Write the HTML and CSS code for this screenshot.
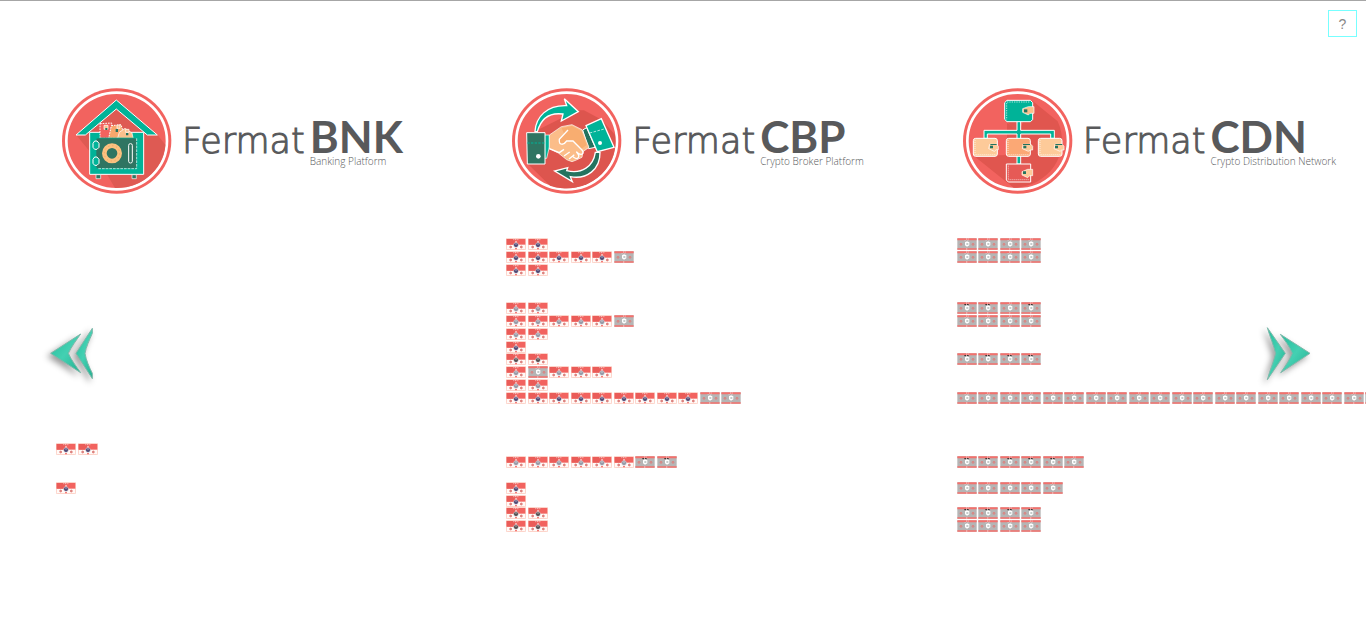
FILE: index.html
```html
<!DOCTYPE html>
<html lang="en">
<head>
<meta charset="utf-8">
<title>Fermat Platforms</title>
<link rel="stylesheet" href="styles.css">
</head>
<body>
<button class="help" type="button" aria-label="Help">?</button>

<main class="stage">
  <header class="brands">
    <section class="brand">
      <svg class="emblem" viewBox="36 25 330 318" aria-hidden="true">
        <ellipse cx="200" cy="184" rx="164" ry="158" fill="#f2635f"/>
        <ellipse cx="200" cy="184" rx="151" ry="145" fill="#f2635f" stroke="#fff" stroke-width="8"/>
        <path d="M78 165 L160 265 L195 325 A147 141 0 0 0 346 195 L322 165 L200 60Z" fill="#de5a53"/>
        <path d="M130 154 L199 92 L268 154Z" fill="#de5a53"/>
        <path d="M199 61 L322 166 H292 L199 88 L106 166 H78Z" fill="#00b398" stroke="#fff" stroke-width="3"/>
        <path d="M119 158 H281 V284 H119Z" fill="#00b398" stroke="#fff" stroke-width="3"/>
        <path d="M150 132 L185 130 L188 176 H150Z" fill="#f2635f" stroke="#fff" stroke-width="3" stroke-dasharray="5 3"/>
        <path d="M184 138 L213 135 L226 176 H176Z" fill="#f7a76c" stroke="#fff" stroke-width="3" stroke-dasharray="5 3"/>
        <path d="M208 158 L225 146 L246 160 L250 178 H202Z" fill="#fbc08c" stroke="#fff" stroke-width="2"/>
        <path d="M162 137h12v12h-12z M201 136h9v10h-9z M227 149h10v9h-10z" fill="#fbc08c" stroke="#fff" stroke-width="2"/>
        <path d="M166 145h6v6h-6z M197 148h7v9h-7z M228 160h7v7h-7z" fill="#24735f"/>
        <rect x="138" y="175" width="122" height="92" rx="6" fill="#2f7562" stroke="#00b398" stroke-width="2"/>
        <path d="M260 176 V267 H144" fill="none" stroke="#fff" stroke-width="2" stroke-dasharray="8 3"/>
        <circle cx="186" cy="221" r="23" fill="#2f7562" stroke="#fbc17f" stroke-width="14"/>
        <circle cx="186" cy="221" r="23" fill="none" stroke="#f2a765" stroke-width="3" stroke-dasharray="4 8"/>
        <rect x="236" y="192" width="11" height="58" rx="5" fill="#2f7562" stroke="#fff" stroke-width="3"/>
        <path d="M134 184h7l6 7v12l-6 6h-7l-5-6v-12z M134 232h7l6 7v12l-6 6h-7l-5-6v-12z" fill="#00b398" stroke="#fff" stroke-width="3"/>
        <path d="M138 285h14v12h-14z M246 285h13v12h-13z" fill="#2f7562" stroke="#fff" stroke-width="2"/>
      </svg>
      <h2 class="wordmark"><span class="name">Fermat</span><span class="suite"><b class="code">BNK</b><small class="tagline">Banking Platform</small></span></h2>
    </section>

    <section class="brand">
      <svg class="emblem" viewBox="36 25 330 318" aria-hidden="true">
        <ellipse cx="200" cy="184" rx="164" ry="158" fill="#f2635f"/>
        <ellipse cx="200" cy="184" rx="151" ry="145" fill="#f2635f" stroke="#fff" stroke-width="8"/>
        <path d="M232 92 L252 92 L305 120 L345 165 A147 141 0 0 1 150 318 L84 253 V165Z" fill="#dd554e"/>
        <path d="M105 155 C108 112 140 76 200 78 L193 57 L235 96 L184 124 L189 103 C150 98 124 112 112 156Z" fill="#00b398" stroke="#fff" stroke-width="4"/>
        <path d="M300 218 C301 270 260 300 211 291 L217 306 L164 274 L203 264 L200 273 C246 284 280 260 286 218Z" fill="#24735f" stroke="#fff" stroke-width="4"/>
        <path d="M134 166 H148 V202 L140 236 H134Z" fill="#00b398" stroke="#fff" stroke-width="2"/>
        <path d="M248 151 L260 144 L286 203 L266 207Z" fill="#24735f" stroke="#fff" stroke-width="3"/>
        <path d="M148 166 L184 141 L216 135 L246 150 L267 203 L249 216 L246 233 L229 241 L216 246 L200 240 L175 220 L148 207Z" fill="#fbbd89" stroke="#fff" stroke-width="2"/>
        <path d="M185 146 L216 139 L244 154 L260 196 L244 208 L218 183 L200 187 L184 195 L177 182 L193 164Z" fill="#f8ad70"/>
        <path d="M204 151 L178 179 C176 197 190 198 200 184 L219 184 L246 211 C256 223 241 230 229 216 M148 207 L178 219 L192 209 M192 229 L209 217 M207 238 L223 225 M229 216 C247 235 228 244 217 228" fill="none" stroke="#fff" stroke-width="4"/>
        <path d="M80 159 H135 V253 H82Z" fill="#2f7562" stroke="#fff" stroke-width="3"/>
        <path d="M82 190 H133" stroke="#00b398" stroke-width="3" stroke-dasharray="7 4"/>
        <circle cx="115" cy="230" r="7" fill="#fff"/>
        <path d="M258 138 L304 117 L342 203 L292 216Z" fill="#00b398" stroke="#fff" stroke-width="4"/>
        <path d="M269 160 L316 147" stroke="#fff" stroke-width="2" stroke-dasharray="8 4"/>
        <circle cx="300" cy="190" r="6" fill="#fff"/>
      </svg>
      <h2 class="wordmark"><span class="name">Fermat</span><span class="suite"><b class="code">CBP</b><small class="tagline">Crypto Broker Platform</small></span></h2>
    </section>

    <section class="brand">
      <svg class="emblem" viewBox="36 25 330 318" aria-hidden="true">
        <ellipse cx="200" cy="184" rx="164" ry="158" fill="#f2635f"/>
        <ellipse cx="200" cy="184" rx="151" ry="145" fill="#f2635f" stroke="#fff" stroke-width="8"/>
        <path d="M245 64 L320 125 A147 141 0 0 1 188 324 L70 230 L168 226 V130 L205 152Z" fill="#e0564f"/>
        <path d="M164 122 L190 150 H210 V124Z" fill="#de5a53"/>
        <path d="M99 176 V152 H198 V124 H209 V152 H310 V176 H299 V163 H209 V253 H198 V163 H109 V176Z" fill="#00b398" stroke="#fff" stroke-width="3"/>
        <path d="M168 62 H238 L245 69 V120 L238 126 H168 L161 119 V69Z" fill="#00b398" stroke="#fff" stroke-width="3"/>
        <path d="M168 67 H238 M167 70 V120" fill="none" stroke="#fff" stroke-width="2" stroke-dasharray="4 3"/>
        <path d="M215 87 L232 81 H249 V101 H237 L232 106 L215 98Z" fill="#fbc08c" stroke="#fff" stroke-width="2"/>
        <path d="M219 89h10v9h-10z" fill="#24735f"/>
        <g stroke="#fff" stroke-width="3">
          <rect x="67" y="176" width="72" height="54" rx="7" fill="#fdca99"/>
          <rect x="166" y="176" width="72" height="54" rx="7" fill="#fba875"/>
          <rect x="262" y="176" width="71" height="54" rx="7" fill="#fdca99"/>
          <path d="M166 253 H239 V307 H172 L166 301Z" fill="#e65a56"/>
        </g>
        <g fill="none" stroke="#fff" stroke-width="2" stroke-dasharray="3 3">
          <path d="M72 181 V225 H134 M171 181 V225 H233 M267 181 V225 H328 M172 258 V300 H234"/>
        </g>
        <path d="M116 194 H137 L142 200 V210 H136 L130 215 L113 207Z M216 194 H240 L245 200 V211 H238 L232 215 L214 207Z M312 194 H334 L339 200 V211 H332 L327 215 L309 207Z M213 276 L230 269 H245 V288 H236 L230 294 L213 286Z" fill="#fdca99" stroke="#fff" stroke-width="2"/>
        <path d="M118 193h19v3h-19z M117 198h9v8h-9z M216 193h21v3h-21z M217 198h9v8h-9z M313 193h21v3h-21z M312 198h9v8h-9z M216 275h9v8h-9z" fill="#24735f"/>
      </svg>
      <h2 class="wordmark"><span class="name">Fermat</span><span class="suite"><b class="code">CDN</b><small class="tagline">Crypto Distribution Network</small></span></h2>
    </section>
  </header>

  <div class="boards">
    <section class="board" data-board="bnk"></section>
    <section class="board" data-board="cbp"></section>
    <section class="board" data-board="cdn"></section>
  </div>

  <button class="nav nav-prev" type="button" aria-label="Previous">
    <svg viewBox="48 45 150 174" width="50" height="58">
      <defs>
        <linearGradient id="teal" x1="0" y1="0" x2="1" y2="1"><stop offset="0" stop-color="#22bd9c"/><stop offset=".5" stop-color="#44d0b2"/><stop offset="1" stop-color="#22b091"/></linearGradient>
      </defs>
      <g fill="url(#teal)" stroke="#7fb8aa" stroke-width="3" stroke-linejoin="round">
        <path d="M62 130 L152 72 C138 92 124 110 115 130 C124 150 138 168 152 188Z"/>
        <path d="M138 130 L187 55 V70 C178 90 168 112 165 130 C168 150 178 172 187 190 V206Z"/>
      </g>
    </svg>
  </button>
  <button class="nav nav-next" type="button" aria-label="Next">
    <svg viewBox="60 45 156 174" width="52" height="58">
      <g fill="url(#teal)" stroke="#7fb8aa" stroke-width="3" stroke-linejoin="round">
        <path d="M210 130 L121 73 C135 92 149 110 157 130 C149 150 136 168 122 188Z"/>
        <path d="M136 130 L82 53 C90 80 102 110 107 130 C102 152 90 180 82 209Z"/>
      </g>
    </svg>
  </button>
</main>

<svg class="symbols" aria-hidden="true">
  <symbol id="tile-done" viewBox="0 0 60 36">
    <rect x="1" y="1" width="58" height="34" rx="3" fill="#fffaf7" stroke="#fbb5a6" stroke-width="2"/>
    <path d="M2 3H58V20H2Z" fill="#f2635f"/>
    <path d="M2 3H30V20H2Z" fill="#ea5c58"/>
    <path d="M22 5H38" stroke="#fff" stroke-width="2" stroke-dasharray="3 2"/>
    <path d="M30 9V14" stroke="#fff" stroke-width="3"/>
    <circle cx="30" cy="21" r="7" fill="currentColor" stroke="#d9d3dc" stroke-width="2"/>
    <path d="M30 16V22" stroke="#fff" stroke-width="2"/>
    <path d="M30 30V34" stroke="#f2635f" stroke-width="5"/>
    <circle cx="14" cy="27" r="3" fill="#c99" stroke="#e4605b" stroke-width="2"/>
    <circle cx="46" cy="27" r="3" fill="#c99" stroke="#e4605b" stroke-width="2"/>
  </symbol>
  <symbol id="tile-concept" viewBox="0 0 60 36">
    <path d="M1 1H59V35H1Z" fill="#b5b5b5"/>
    <path d="M1 1H59V7H1Z M1 31H59V35H1Z" fill="#f4706c"/>
    <path d="M27 3H35 M27 33H33" stroke="#fff" stroke-width="2" stroke-dasharray="3 2"/>
    <path d="M22 8H38" stroke="currentColor" stroke-width="3" stroke-dasharray="5 3"/>
    <path d="M24 13L30 10L37 13V22L30 26L24 22Z" fill="#fff"/>
    <path d="M28 16H34V20H28Z" fill="#a9b3b0"/>
    <circle cx="12" cy="19" r="3" fill="#c79a98" stroke="#e77672" stroke-width="2"/>
    <circle cx="48" cy="19" r="3" fill="#c79a98" stroke="#e77672" stroke-width="2"/>
  </symbol>
</svg>
<script src="boards.js"></script>
</body>
</html>
```
FILE: styles.css
```css
* {
  box-sizing: border-box;
}

body {
  margin: 0;
  background: #fff;
  color: #58595b;
  font-family: Lato, "Liberation Sans", sans-serif;
  overflow: hidden;
}

.stage {
  position: relative;
  min-height: 100vh;
  padding-top: 87px;
  border-top: 1px solid #a6a6a6;
}

.help {
  position: absolute;
  z-index: 2;
  top: 10px;
  right: 9px;
  width: 29px;
  height: 27px;
  padding: 0;
  border: 1px solid #7ff;
  background: #fff;
  color: #888;
  font: 14px "Liberation Sans", sans-serif;
}

/* The last column runs past the right edge of the window. */
.brands,
.boards {
  display: grid;
  grid-template-columns: repeat(3, minmax(0, 1fr));
}

.brands {
  margin-right: -47px;
  padding-left: 62px;
}

.brand {
  display: flex;
  align-items: flex-start;
  gap: 10px;
}

.emblem {
  flex: none;
  width: 110px;
  height: 106px;
}

.wordmark {
  display: flex;
  align-items: baseline;
  gap: 5px;
  margin: 29px 0 0;
  font-weight: 300;
  line-height: 38px;
  white-space: nowrap;
}

.name {
  font-family: "DejaVu Sans Light", "DejaVu Sans", sans-serif;
  font-size: 35px;
  font-weight: 200;
  -webkit-text-stroke: 1px #58595b;
}

.suite {
  display: flex;
  flex-direction: column;
}

.code {
  font-size: 44px;
  font-weight: 700;
}

.tagline {
  font-family: "Open Sans", "Noto Sans", sans-serif;
  font-size: 10px;
  line-height: 12px;
}

.boards {
  margin-top: 44px;
  margin-right: -41px;
  padding-left: 56px;
}

.board {
  display: grid;
  grid-template-columns: repeat(20, 1fr);
  grid-template-rows: repeat(23, 1fr);
  width: 430px;
  height: 295px;
}

.tile {
  width: 20px;
  height: 12px;
}

.core-navy { color: #3b3566; }
.core-slate { color: #8b8f9c; }
.core-dark { color: #403c3c; }
.mark-light { color: #c4c4c4; }
.mark-black { color: #222; }

.nav {
  position: absolute;
  top: 324px;
  padding: 0;
  border: 0;
  background: none;
  line-height: 0;
  filter: drop-shadow(-3px 3px 3px #999);
}

.nav-prev {
  left: 46px;
}

.nav-next {
  right: 54px;
}

.symbols {
  position: absolute;
  width: 0;
  height: 0;
}
```
FILE: boards.js
```js
// Each entry: [row, finished tiles and concept tiles in order, colour class].
// "d" is a finished component, "c" a concept one, "k" a concept with a black mark.
const boards = {
  bnk: [[17, "dd", "navy"], [20, "d", "navy"]],
  cbp: [
    [1, "dd", "navy"], [2, "dddddc", "navy"], [3, "dd", "navy"],
    [6, "dd", "slate"], [7, "dddddc", "slate"], [8, "dd", "slate"],
    [9, "d", "navy"], [10, "dd", "dark"], [11, "dcddd", "slate"],
    [12, "dd", "slate"], [13, "dddddddddcc", "navy"],
    [18, "ddddddkk", "slate"], [20, "d", "navy"], [21, "d", "navy"],
    [22, "dd", "dark"], [23, "dd", "dark"]
  ],
  cdn: [
    [1, "cccc"], [2, "cccc"], [6, "kkck"], [7, "cccc"], [10, "kkkk"],
    [13, "cccccccccccccccccccc"], [18, "kkkkkc"], [20, "ccccc"],
    [22, "kkkk"], [23, "cccc"]
  ]
};

const SVG = "http://www.w3.org/2000/svg";

for (const [id, rows] of Object.entries(boards)) {
  const board = document.querySelector(`[data-board="${id}"]`);
  for (const [row, kinds, core] of rows) {
    [...kinds].forEach((kind, i) => {
      const tile = document.createElementNS(SVG, "svg");
      const use = document.createElementNS(SVG, "use");
      const tone = kind === "d" ? `core-${core}` : kind === "k" ? "mark-black" : "mark-light";
      tile.setAttribute("class", `tile ${tone}`);
      tile.style.gridArea = `${row} / ${i + 1}`;
      use.setAttribute("href", kind === "d" ? "#tile-done" : "#tile-concept");
      tile.append(use);
      board.append(tile);
    });
  }
}
```
